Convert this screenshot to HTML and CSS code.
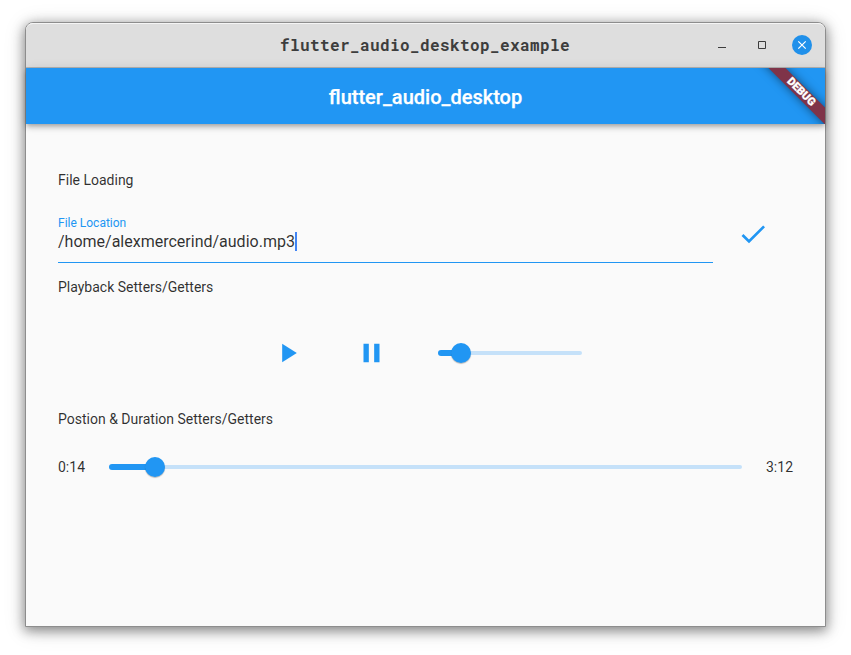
FILE: index.html
```html
<!DOCTYPE html>
<html lang="en">
<head>
<meta charset="utf-8">
<title>flutter_audio_desktop_example</title>
<link rel="stylesheet" href="styles.css">
</head>
<body>
<div class="window">
  <header class="titlebar">
    <span class="titlebar-text">flutter_audio_desktop_example</span>
    <div class="controls">
      <svg class="control" viewBox="0 0 20 20"><path d="M6 12.5h8" stroke="#3d3d3d"/></svg>
      <svg class="control" viewBox="0 0 20 20"><path d="M6.5 6.5h7v7h-7z" stroke="#3d3d3d" fill="none"/></svg>
      <svg class="control" viewBox="0 0 20 20"><circle cx="10" cy="10" r="10" fill="#2090ea"/><path d="M6.3 6.3l7.4 7.4M13.7 6.3l-7.4 7.4" stroke="#fff" stroke-width="1.2"/></svg>
    </div>
  </header>
  <div class="appbar">
    <h1 class="appbar-title">flutter_audio_desktop</h1>
    <div class="banner-clip"><div class="banner">DEBUG</div></div>
  </div>
  <main class="content">
    <h2 class="label">File Loading</h2>
    <div class="file-row">
      <div class="field">
        <div class="field-label">File Location</div>
        <div class="field-value">/home/alexmercerind/audio.mp3<span class="caret"></span></div>
      </div>
      <svg class="icon check" viewBox="0 0 24 24"><path d="M9 16.17L4.83 12l-1.42 1.41L9 19 21 7l-1.41-1.41z"/></svg>
    </div>
    <h2 class="label">Playback Setters/Getters</h2>
    <div class="playback-row">
      <svg class="icon" viewBox="-0.37 0 24 24"><path d="M8 5v14l11-7z"/></svg>
      <svg class="icon" viewBox="-0.37 0 24 24"><path d="M6 19h4V5H6v14zm8-14v14h4V5h-4z"/></svg>
      <div class="slider volume"><div class="active"></div><div class="thumb"></div><div class="inactive"></div></div>
    </div>
    <h2 class="label">Postion &amp; Duration Setters/Getters</h2>
    <div class="position-row">
      <span class="time">0:14</span>
      <div class="slider position"><div class="active"></div><div class="thumb"></div><div class="inactive"></div></div>
      <span class="time">3:12</span>
    </div>
  </main>
</div>
</body>
</html>
```
FILE: styles.css
```css
* { box-sizing: border-box; }
body {
  margin: 0;
  padding: 22px 25px 0;
  height: 655px;
  overflow: hidden;
  background: #fff;
  font-family: Roboto, sans-serif;
  color: rgba(0, 0, 0, 0.82);
}
.window {
  width: 801px;
  height: 605px;
  border: 1px solid #8d8d8d;
  border-radius: 8px 8px 0 0;
  background: #fafafa;
  box-shadow: 0 3px 12px 1px rgba(0, 0, 0, 0.4), 0 3px 22px rgba(0, 0, 0, 0.15);
}
.titlebar {
  display: flex;
  align-items: center;
  justify-content: flex-end;
  height: 45px;
  padding: 0 13px 1px 0;
  border-top: 1px solid #f5f5f5;
  border-bottom: 1px solid #b5b5b5;
  border-radius: 7px 7px 0 0;
  background: #dedede;
}
.titlebar-text {
  flex: 1;
  padding-left: 112px;
  text-align: center;
  font: bold 16px/20px "Roboto Mono", "DejaVu Sans Mono", monospace;
  letter-spacing: 0.4px;
  color: #3d3d3d;
}
.controls { display: flex; gap: 20px; }
.control { display: block; width: 20px; height: 20px; }
.appbar {
  position: relative;
  display: flex;
  align-items: center;
  justify-content: center;
  height: 56px;
  background: #2196f3;
  box-shadow: 0 2px 4px -1px rgba(0, 0, 0, 0.2), 0 4px 5px rgba(0, 0, 0, 0.14), 0 1px 10px rgba(0, 0, 0, 0.12);
}
.appbar-title {
  margin: 2px 0 0;
  font-size: 20px;
  line-height: 24px;
  font-weight: 500;
  color: #fff;
  -webkit-text-stroke: 0.25px #fff;
}
.banner-clip {
  position: absolute;
  top: 0;
  right: 0;
  width: 80px;
  height: 56px;
  overflow: hidden;
}
.banner {
  position: absolute;
  top: 18px;
  right: -36px;
  width: 120px;
  height: 12px;
  transform: rotate(45deg);
  background: #7f3449;
  box-shadow: 0 0 10px rgba(0, 0, 0, 0.5);
  color: #fff;
  font-size: 11px;
  line-height: 12px;
  font-weight: 900;
  text-align: center;
  -webkit-text-stroke: 0.3px #fff;
}
.content { padding: 46px 32px 0; }
.label {
  margin: 0;
  font-size: 14px;
  line-height: 20px;
  font-weight: 400;
}
.file-row {
  display: flex;
  align-items: flex-start;
  height: 87px;
  padding: 25px 24px 0 0;
  gap: 24px;
}
.field {
  flex: 1;
  height: 48px;
  border-bottom: 1px solid #2196f3;
}
.check { margin-top: 3px; }
.field-label {
  font-size: 12px;
  line-height: 16px;
  color: #2196f3;
}
.field-value {
  display: flex;
  align-items: center;
  height: 22px;
  font-size: 16px;
  line-height: 20px;
}
.caret { width: 2px; height: 19px; margin-bottom: 1px; background: #4285f4; }
.icon { flex: none; width: 32px; height: 32px; fill: #2196f3; }
.playback-row {
  display: flex;
  align-items: center;
  height: 112px;
  padding-left: 213px;
  gap: 50px;
}
.slider { display: flex; align-items: center; height: 20px; }
.active {
  height: 6px;
  margin-right: -10px;
  border-radius: 3px 0 0 3px;
  background: #2196f3;
}
.thumb {
  flex: none;
  z-index: 1;
  width: 20px;
  height: 20px;
  border-radius: 50%;
  background: #2196f3;
  box-shadow: 0 1px 1px rgba(0, 0, 0, 0.25);
}
.inactive {
  flex: 1;
  height: 4px;
  margin-left: -10px;
  border-radius: 0 2px 2px 0;
  background: #c5e1f9;
}
.playback-row .icon + .icon { margin-left: 2px; }
.volume { width: 144px; margin-left: 1px; }
.volume .active { width: 23px; }
.position-row {
  display: flex;
  align-items: center;
  height: 76px;
}
.position { flex: 1; margin: 0 24px; }
.position .active { width: 46px; }
.time { width: 27px; font-size: 14px; line-height: 20px; white-space: nowrap; }
```
